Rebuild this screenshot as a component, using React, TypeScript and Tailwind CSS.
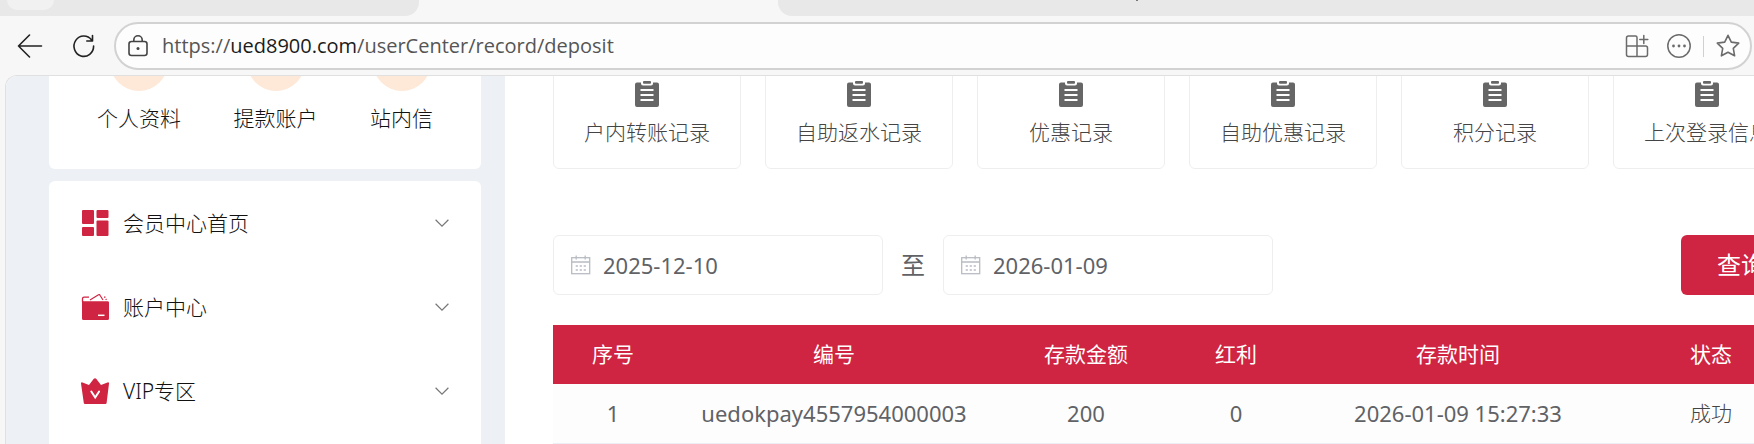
import type { ReactNode } from 'react';

const shortcuts = ['个人资料', '提款账户', '站内信'];

const records = ['户内转账记录', '自助返水记录', '优惠记录', '自助优惠记录', '积分记录', '上次登录信息'];

const columns = [
  { label: '序号', width: 'w-[120px]' },
  { label: '编号', width: 'w-[322px]' },
  { label: '存款金额', width: 'w-[182px]' },
  { label: '红利', width: 'w-[118px]' },
  { label: '存款时间', width: 'w-[326px]' },
  { label: '状态', width: 'w-[180px]' },
];

const deposits = [
  { no: '1', id: 'uedokpay4557954000003', amount: '200', bonus: '0', time: '2026-01-09 15:27:33', status: '成功' },
];

function DashboardIcon() {
  return (
    <svg viewBox="0 0 28 28" className="size-7" fill="#cf2442">
      <rect x="1" y="1" width="12" height="14" rx="1" />
      <rect x="15.500" y="1" width="12" height="8" rx="1" />
      <rect x="1" y="18" width="12" height="9" rx="1" />
      <rect x="15.500" y="11.500" width="12" height="15.500" rx="1" />
    </svg>
  );
}

function WalletIcon() {
  return (
    <svg viewBox="0 0 28 28" className="size-7" fill="none">
      <path d="M1 7.500q.5.700 2 .7h23.500q1.500 0 1.500 1.300v16a1.500 1.500 0 0 1-1.500 1.500H2.500A1.500 1.500 0 0 1 1 25.500z" fill="#cf2442" />
      <path d="M1.500 9V5.800Q1.500 4.200 3.100 4.200H8" stroke="#cf2442" strokeWidth="1.300" />
      <path d="M9 7L17.500 1.700Q18.500 1.200 19 2.200L22 7M23 4.200h1.500M24.700 5.800l.8 1" stroke="#cf2442" strokeWidth="1.200" />
      <path d="M17 22.300h6.500" stroke="#fff" strokeWidth="1.500" />
    </svg>
  );
}

function CrownIcon() {
  return (
    <svg viewBox="0 0 28 28" className="size-7">
      <path
        d="M12.800 1.800Q14 .6 15.200 1.800L20 8l6.500-2.600q1.700-.4 1.500 1.200L25.600 26q-.2 1-1.200 1H4q-1 0-1.200-1L0 6.600q-.2-1.600 1.500-1.200L8 8z"
        fill="#cf2442"
      />
      <path d="M10.300 14.500l3.900 6 3.900-6" fill="none" stroke="#fff" strokeWidth="2" strokeLinecap="round" />
    </svg>
  );
}

function ClipboardIcon() {
  return (
    <svg viewBox="0 0 24 26" className="h-[26px] w-6" fill="#666">
      <path d="M2 1.500h4v1q0 2 2 2h8q2 0 2-2v-1h4q2 0 2 2V24q0 2-2 2H2q-2 0-2-2V3.500q0-2 2-2z" />
      <rect x="8" y="0" width="8" height="2.800" rx="1" />
      <path d="M5.500 9h13M5.500 14h13M5.500 19h13" stroke="#fff" strokeWidth="1.900" />
    </svg>
  );
}

function CalendarIcon() {
  return (
    <svg viewBox="0 0 20 20" className="size-5 shrink-0" fill="none" stroke="#b9bcc3" strokeWidth="1.300">
      <rect x=".7" y="2.700" width="18" height="16" />
      <path d="M.7 7h18M5.200 .5v4M14.200 .5v4" />
      <path d="M4.700 11h2.200M8.700 11h2.200M12.700 11h2.200M4.700 15h2.200M8.700 15h2.200M12.700 15h2.200" strokeWidth="1.600" />
    </svg>
  );
}

function ChevronIcon() {
  return (
    <svg viewBox="0 0 14 8" className="h-2 w-3.5" fill="none" stroke="#777" strokeWidth="1.200">
      <path d="M.6 .8L7 7.100L13.400 .8" />
    </svg>
  );
}

const menu: { label: string; icon: ReactNode }[] = [
  { label: '会员中心首页', icon: <DashboardIcon /> },
  { label: '账户中心', icon: <WalletIcon /> },
  { label: 'VIP专区', icon: <CrownIcon /> },
];

function TabStrip() {
  return (
    <div className="flex h-4 shrink-0 justify-between">
      <div className="h-4 w-[419px] rounded-br-[14px] bg-[#e8e8e8] pl-[7px]">
        <div className="h-2.5 w-[47px] rounded-b-[10px] bg-[#f1f1f1]" />
      </div>
      <div className="ml-[359px] h-4 flex-1 rounded-bl-[14px] bg-[#e8e8e8] pl-[358px]">
        <div className="h-px w-0.5 bg-[#777]" />
      </div>
    </div>
  );
}

function AddressBar() {
  return (
    <div className="flex shrink-0 items-center pt-1.5 pr-0.5 pb-[5px] pl-[17px]">
      <button aria-label="Back" className="mr-7">
        <svg viewBox="0 0 26 24" className="h-6 w-[26px]" fill="none" stroke="#222" strokeWidth="1.600" strokeLinecap="round" strokeLinejoin="round">
          <path d="M24.500 12H1.500M12.500 1L1.500 12l11 11" />
        </svg>
      </button>
      <button aria-label="Refresh" className="mr-[19px]">
        <svg viewBox="0 0 24 26" className="h-[26px] w-6" fill="none" stroke="#222" strokeWidth="1.600" strokeLinecap="round" strokeLinejoin="round">
          <path d="M20.600 7A9.800 10.200 0 1 0 22.600 13M21.500 2.500v5.500h-5.700" />
        </svg>
      </button>
      <div className="flex h-12 flex-1 items-center rounded-full border-2 border-[#d2d2d2] bg-[#fdfdfd] pr-2.5 pl-3">
        <svg viewBox="0 0 20 22" className="h-[22px] w-5 shrink-0" fill="none" stroke="#444" strokeWidth="1.600">
          <rect x="1" y="6.500" width="18" height="14" rx="2.500" />
          <path d="M5.800 6.500V5a4.200 4.200 0 0 1 8.400 0v1.500" />
          <circle cx="10" cy="13.500" r="1.500" fill="#444" stroke="none" />
        </svg>
        <div className="ml-3.5 flex-1 font-['Open_Sans','Noto_Sans',sans-serif] text-[20px] leading-7 text-[#555]">
          https://<span className="text-[#1b1b1b]">ued8900.com</span>/userCenter/record/deposit
        </div>
        <button aria-label="Apps">
          <svg viewBox="0 0 24 24" className="size-6" fill="none" stroke="#6b6b6b" strokeWidth="1.500" strokeLinecap="round">
            <path d="M12 12V3.500Q12 2 10.500 2H3.500Q1.500 2 1.500 4v16.500q0 2 2 2h17q2 0 2-2V14q0-2-2-2H1.500M12 12v10.500M18.800 1.500v8M14.800 5.500h8" />
          </svg>
        </button>
        <button aria-label="More" className="ml-[18px]">
          <svg viewBox="0 0 24 24" className="size-6" fill="none" stroke="#6b6b6b" strokeWidth="1.500">
            <circle cx="12" cy="12" r="11.200" />
            <g fill="#6b6b6b" stroke="none">
              <circle cx="6.500" cy="12" r="1.400" />
              <circle cx="12" cy="12" r="1.400" />
              <circle cx="17.500" cy="12" r="1.400" />
            </g>
          </svg>
        </button>
        <div className="mx-3 h-[21px] w-px bg-[#d0d0d0]" />
        <button aria-label="Favorite">
          <svg viewBox="0 0 24 24" className="size-6" fill="none" stroke="#6b6b6b" strokeWidth="1.600" strokeLinejoin="round">
            <path d="M12 1.300l3.300 6.800 7.400 1-5.400 5.200 1.300 7.500L12 18.300l-6.600 3.500 1.300-7.500L1.300 9.100l7.400-1z" />
          </svg>
        </button>
      </div>
    </div>
  );
}

function Sidebar() {
  return (
    <aside className="flex w-[499px] shrink-0 flex-col gap-3 bg-[#edf1f6] pr-6 pl-[43px] font-light text-[#111]">
      <div className="flex h-[141px] items-start justify-between rounded-b-md bg-white px-12 pt-[5px]">
        {shortcuts.map((label) => (
          <a key={label} href="#" className="flex flex-col items-center gap-[13px]">
            <span className="size-[58px] rounded-full bg-[#fee8d7]" />
            <span className="text-[21px] leading-7">{label}</span>
          </a>
        ))}
      </div>
      <nav className="flex-1 rounded-t-md bg-white">
        {menu.map((item) => (
          <button key={item.label} className="flex h-[84px] w-full items-center px-8">
            {item.icon}
            <span className="ml-3.5 flex-1 text-left text-[21px] leading-7">{item.label}</span>
            <ChevronIcon />
          </button>
        ))}
      </nav>
    </aside>
  );
}

function DateField({ id, label, value }: { id: string; label: string; value: string }) {
  return (
    <div className="flex h-[60px] w-[330px] items-center gap-3 rounded-md border border-[#eee] px-[17px]">
      <label htmlFor={id} aria-label={label}>
        <CalendarIcon />
      </label>
      <input id={id} defaultValue={value} className="w-full min-w-0 text-[22px] leading-7 text-[#606266] outline-none" />
    </div>
  );
}

function Content() {
  return (
    <main className="min-w-0 flex-1 bg-white pl-12">
      <div className="min-w-[1248px] text-[#606266]">
        <div className="grid grid-cols-6 gap-6">
          {records.map((label) => (
            <a
              key={label}
              href="#"
              className="flex h-[141px] flex-col items-center justify-end gap-[11px] rounded-md border border-[#eee] pb-[22px] text-[21px] leading-7 font-light whitespace-nowrap text-[#444]"
            >
              <ClipboardIcon />
              {label}
            </a>
          ))}
        </div>

        <div className="mt-[66px] flex items-center">
          <DateField id="from" label="开始日期" value="2025-12-10" />
          <span className="w-[60px] text-center text-2xl">至</span>
          <DateField id="to" label="结束日期" value="2026-01-09" />
          <button className="ml-auto h-[60px] w-[120px] rounded-md bg-[#cf2442] text-2xl text-white">查询</button>
        </div>

        <table className="mt-[30px] w-full table-fixed border-separate border-spacing-0 text-center">
          <thead>
            <tr className="h-[59px] bg-[#cf2442] text-[21px] leading-7 text-white">
              {columns.map((c) => (
                <th key={c.label} className={`${c.width} pt-0 pb-0.5 font-normal`}>{c.label}</th>
              ))}
            </tr>
          </thead>
          <tbody>
            {deposits.map((d) => (
              <tr key={d.id} className="h-[60px] bg-[#fdfdfd] text-[22px] leading-7 *:border-b *:border-[#ebeef5] *:pb-0.5">
                <td>{d.no}</td>
                <td>{d.id}</td>
                <td>{d.amount}</td>
                <td>{d.bonus}</td>
                <td>{d.time}</td>
                <td className="text-[21px] font-light text-[#444]">{d.status}</td>
              </tr>
            ))}
          </tbody>
        </table>
      </div>
    </main>
  );
}

export default function App() {
  return (
    <div className="flex h-screen flex-col overflow-hidden bg-[#f7f7f7] font-['Noto_Sans','Noto_Sans_CJK_SC',sans-serif]">
      <TabStrip />
      <AddressBar />
      <div className="ml-[5px] flex min-h-0 flex-1 overflow-hidden rounded-tl-[12px] border-t border-l border-[#e0e0e0] bg-white">
        <div className="-mt-12 flex min-w-0 flex-1">
          <Sidebar />
          <Content />
        </div>
      </div>
    </div>
  );
}
